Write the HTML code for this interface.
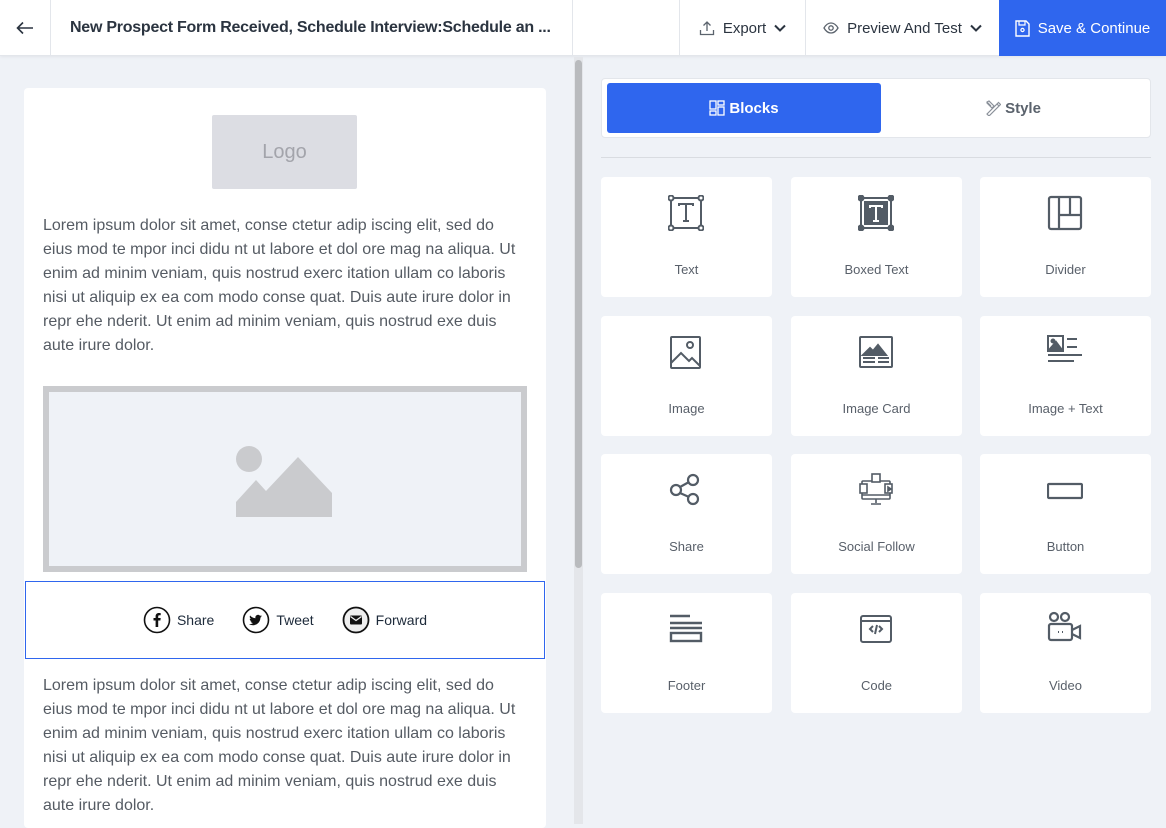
<!DOCTYPE html>
<html><head><meta charset="utf-8"><style>
*{box-sizing:border-box;margin:0;padding:0}
body{width:1166px;height:824px;overflow:hidden;background:#eff2f7;font-family:"Liberation Sans",sans-serif;position:relative}
.hdr{position:absolute;left:0;top:0;width:1166px;height:56px;background:#fff;border-bottom:1px solid #e3e6eb;box-shadow:0 1px 3px rgba(0,0,0,.06)}
.cell{position:absolute;top:0;height:56px;display:flex;align-items:center;justify-content:center;border-left:1px solid #e3e6eb;font-size:15px;color:#2b3440}
.card{position:absolute;left:24px;top:88px;width:522px;height:740px;background:#fff;border-radius:4px}
p.lo{position:absolute;left:43px;width:483px;font-size:16px;line-height:24px;color:#555b63}
.tile{position:absolute;width:171px;height:120px;background:#fff;border-radius:4px}
.tile svg{position:absolute;left:67px;top:18px}
.tile span{position:absolute;left:0;right:0;top:85px;text-align:center;font-size:13px;color:#59606a}
</style></head><body>
<div class="hdr">
 <div class="cell" style="left:0;width:50px;border:none;font-size:20px">
  <svg width="18" height="14" viewBox="0 0 18 14"><path d="M17 7H2M7 1.5 1.5 7 7 12.5" stroke="#2b3440" stroke-width="1.6" fill="none"/></svg></div>
 <div class="cell" style="left:50px;width:523px;justify-content:flex-start;padding-left:19px;font-weight:bold;font-size:16px;letter-spacing:-0.25px;border-right:1px solid #e3e6eb">New Prospect Form Received, Schedule Interview:Schedule an ...</div>
 <div class="cell" style="left:679px;width:126px;gap:8px">
  <svg width="16" height="16" viewBox="0 0 16 16"><path d="M8 11V2M4.5 5.5 8 2l3.5 3.5M1.5 10v4.5h13V10" stroke="#5b636d" stroke-width="1.3" fill="none"/></svg>Export
  <svg width="12" height="8" viewBox="0 0 12 8"><path d="M1 1.5 6 6.5 11 1.5" stroke="#2b3440" stroke-width="2" fill="none"/></svg></div>
 <div class="cell" style="left:805px;width:194px;gap:8px">
  <svg width="16" height="12" viewBox="0 0 16 12"><path d="M1 6C3 2.5 5.5 1 8 1s5 1.5 7 5c-2 3.5-4.5 5-7 5S3 9.5 1 6z" stroke="#5b636d" stroke-width="1.3" fill="none"/><circle cx="8" cy="6" r="2.2" stroke="#5b636d" stroke-width="1.3" fill="none"/></svg>Preview And Test
  <svg width="12" height="8" viewBox="0 0 12 8"><path d="M1 1.5 6 6.5 11 1.5" stroke="#2b3440" stroke-width="2" fill="none"/></svg></div>
 <div class="cell" style="left:999px;width:167px;background:#2f66ee;color:#fff;border:none;gap:8px">
  <svg width="15" height="17" viewBox="0 0 15 17"><path d="M1 1h10l3 3v12H1z" stroke="#fff" stroke-width="1.4" fill="none"/><path d="M4 1v4h6V1" stroke="#fff" stroke-width="1.2" fill="none"/><circle cx="7.5" cy="10" r="1.6" stroke="#fff" stroke-width="1.2" fill="none"/></svg>Save &amp; Continue</div>
</div>

<div class="card"></div>
<div style="position:absolute;left:212px;top:115px;width:145px;height:74px;background:#dcdde3;border-radius:2px;color:#a3a4ab;font-size:20px;display:flex;align-items:center;justify-content:center">Logo</div>
<p class="lo" style="top:214px">Lorem ipsum dolor sit amet, conse ctetur adip iscing elit, sed do eius mod te mpor inci didu nt ut labore et dol ore mag na aliqua. Ut enim ad minim veniam, quis nostrud exerc itation ullam co laboris nisi ut aliquip ex ea com modo conse quat. Duis aute irure dolor in repr ehe nderit. Ut enim ad minim veniam, quis nostrud exe duis aute irure dolor.</p>
<div style="position:absolute;left:43px;top:386px;width:484px;height:186px;border:6px solid #cacbce;background:#eff2f7"></div>
<svg style="position:absolute;left:235px;top:445px" width="98" height="72" viewBox="0 0 98 72"><circle cx="14" cy="14" r="13" fill="#cacbce"/><path d="M1 57 21 35l10 11 32-34 34 36v24H1z" fill="#cacbce"/></svg>
<div style="position:absolute;left:25px;top:581px;width:520px;height:78px;border:1px solid #2f66ee;background:#fff;display:flex;align-items:center;justify-content:center;font-size:14px;color:#1d2a3a">
 <svg width="28" height="28" viewBox="0 0 28 28"><circle cx="14" cy="14" r="12.5" stroke="#111" stroke-width="1.6" fill="none"/><path d="M15.2 21v-6.5h2.2l.3-2.5h-2.5v-1.5c0-.7.2-1.2 1.2-1.2h1.3V7.1c-.3 0-1-.1-1.9-.1-1.9 0-3.2 1.2-3.200 3.300V12h-2.100v2.500h2.100V21z" fill="#111"/></svg><span style="margin:0 28px 0 6px">Share</span>
 <svg width="28" height="28" viewBox="0 0 28 28"><circle cx="14" cy="14" r="12.5" stroke="#111" stroke-width="1.6" fill="none"/><path d="M20 10.2c-.5.2-1 .4-1.5.4.5-.3 1-.8 1.2-1.4-.5.3-1.1.5-1.7.6a2.6 2.6 0 0 0-4.5 2.4c-2.2-.1-4.1-1.2-5.4-2.7-.7 1.2-.3 2.7.8 3.5-.4 0-.8-.1-1.2-.3 0 1.3.9 2.4 2.1 2.6-.4.1-.8.1-1.2 0 .3 1 1.3 1.8 2.4 1.8A5.3 5.3 0 0 1 7 18.1c1.2.7 2.5 1.1 4 1.1 4.8 0 7.5-4 7.4-7.6.6-.4 1.1-.9 1.6-1.4z" fill="#111"/></svg><span style="margin:0 28px 0 6px">Tweet</span>
 <svg width="28" height="28" viewBox="0 0 28 28"><circle cx="14" cy="14" r="12.5" stroke="#111" stroke-width="1.8" fill="#eee"/><rect x="8" y="9.5" width="12" height="9" rx="1" fill="#111"/><path d="M8.5 10.5 14 14.5l5.5-4" stroke="#eee" stroke-width="1.3" fill="none"/></svg><span style="margin-left:6px">Forward</span>
</div>
<p class="lo" style="top:674px">Lorem ipsum dolor sit amet, conse ctetur adip iscing elit, sed do eius mod te mpor inci didu nt ut labore et dol ore mag na aliqua. Ut enim ad minim veniam, quis nostrud exerc itation ullam co laboris nisi ut aliquip ex ea com modo conse quat. Duis aute irure dolor in repr ehe nderit. Ut enim ad minim veniam, quis nostrud exe duis aute irure dolor.</p>
<div style="position:absolute;left:574px;top:57px;width:9px;height:767px;background:#e4e6ea"></div>
<div style="position:absolute;left:575px;top:60px;width:7px;height:508px;background:#b9bbbe;border-radius:4px"></div>

<div style="position:absolute;left:601px;top:78px;width:550px;height:60px;background:#fff;border:1px solid #e3e6eb;border-radius:4px"></div>
<div style="position:absolute;left:607px;top:83px;width:274px;height:50px;background:#2f66ee;border-radius:3px;color:#fff;font-weight:bold;font-size:15px;display:flex;align-items:center;justify-content:center;gap:4px">
 <svg width="16" height="16" viewBox="0 0 16 16" fill="none" stroke="#fff" stroke-width="1.3"><rect x="1" y="1" width="6" height="8"/><rect x="1" y="11" width="6" height="4"/><rect x="9" y="1" width="6" height="4"/><rect x="9" y="7" width="6" height="8"/></svg>Blocks</div>
<div style="position:absolute;left:881px;top:83px;width:264px;height:50px;color:#5b636d;font-weight:bold;font-size:15px;display:flex;align-items:center;justify-content:center;gap:4px">
 <svg width="16" height="16" viewBox="0 0 16 16" fill="none" stroke="#8a9099" stroke-width="1.2"><path d="M2 14 12 4l2 2L4 16zM12 4l1.5-1.5 2 2L14 6M2 2l4 4M2 2l2-1 5 5-2 2-5-5z"/></svg>Style</div>
<div style="position:absolute;left:601px;top:157px;width:550px;height:1px;background:#d9dce1"></div>

<div class="tile" style="left:601px;top:177px"><svg width="36" height="36" viewBox="0 0 36 36" fill="none" stroke="#535c66" stroke-width="2"><rect x="3" y="3" width="30" height="30"/><circle cx="3" cy="3" r="2.5" fill="#fff"/><circle cx="33" cy="3" r="2.5" fill="#fff"/><circle cx="3" cy="33" r="2.5" fill="#fff"/><circle cx="33" cy="33" r="2.5" fill="#fff"/><path d="M11 11V9h14v2M18 9v17M15 26h6"/></svg><span>Text</span></div>
<div class="tile" style="left:791px;top:177px"><svg width="36" height="36" viewBox="0 0 36 36" fill="none" stroke="#535c66" stroke-width="2"><path d="M3 5v26M33 5v26M5 3h26M5 33h26"/><circle cx="3" cy="3" r="2.5" fill="#535c66"/><circle cx="33" cy="3" r="2.5" fill="#535c66"/><circle cx="3" cy="33" r="2.5" fill="#535c66"/><circle cx="33" cy="33" r="2.5" fill="#535c66"/><rect x="7" y="7" width="22" height="22" fill="#535c66"/><path d="M12 13v-2h12v2M18 11v15M15 26h6" stroke="#fff"/></svg><span>Boxed Text</span></div>
<div class="tile" style="left:980px;top:177px"><svg width="36" height="36" viewBox="0 0 36 36" fill="none" stroke="#535c66" stroke-width="2.2"><rect x="2" y="2" width="32" height="32" rx="2"/><path d="M12 2v32M12 20h22M23 2v18"/></svg><span>Divider</span></div>

<div class="tile" style="left:601px;top:316px"><svg width="36" height="36" viewBox="0 0 36 36" fill="none" stroke="#535c66" stroke-width="2"><rect x="3" y="3" width="29" height="31" rx="1"/><circle cx="22" cy="11" r="3"/><path d="M3 29l10-10 8 8 3-3 8 8"/></svg><span>Image</span></div>
<div class="tile" style="left:791px;top:316px"><svg width="36" height="36" viewBox="0 0 36 36" fill="none" stroke="#535c66" stroke-width="2"><rect x="2" y="3" width="32" height="30" rx="1"/><path d="M5 21l7-7 3 3 5-6 8 10z" fill="#535c66"/><path d="M5 24h12M20 24h11M5 28h12M20 28h11" stroke-width="2"/></svg><span>Image Card</span></div>
<div class="tile" style="left:980px;top:316px"><svg width="36" height="36" viewBox="0 0 36 36" fill="none" stroke="#535c66" stroke-width="2"><rect x="1" y="2" width="15" height="15"/><path d="M2 16l7-8 6 8z" fill="#535c66"/><circle cx="6" cy="7" r="1.5" fill="#535c66"/><path d="M20 5h10M20 13h10M1 21h34M1 27h26" stroke-width="2"/></svg><span>Image + Text</span></div>

<div class="tile" style="left:601px;top:454px"><svg width="36" height="36" viewBox="0 0 36 36" fill="none" stroke="#535c66" stroke-width="2.2"><circle cx="8" cy="18" r="5"/><circle cx="25" cy="8" r="5"/><circle cx="25" cy="27" r="5"/><path d="M12 15l9-5M12 21l9 4"/></svg><span>Share</span></div>
<div class="tile" style="left:791px;top:454px"><svg width="36" height="36" viewBox="0 0 36 36" fill="none" stroke="#535c66" stroke-width="1.6"><rect x="4" y="9" width="28" height="18" rx="1"/><path d="M4 23h28M18 27v4M13 32h10"/><rect x="14" y="2" width="8" height="8" fill="#fff"/><rect x="2" y="12" width="7" height="9" fill="#fff"/><rect x="27" y="12" width="7" height="9" fill="#fff"/><path d="M30 15v4l3-2z" fill="#535c66"/></svg><span>Social Follow</span></div>
<div class="tile" style="left:980px;top:454px"><svg width="36" height="36" viewBox="0 0 36 36" fill="none" stroke="#535c66" stroke-width="2.2"><rect x="1" y="12" width="34" height="14" rx="1"/></svg><span>Button</span></div>

<div class="tile" style="left:601px;top:593px"><svg width="36" height="36" viewBox="0 0 36 36" fill="none" stroke="#535c66" stroke-width="2.4"><path d="M2 5h20M2 12h32M2 17h32"/><rect x="3" y="22" width="30" height="8"/></svg><span>Footer</span></div>
<div class="tile" style="left:791px;top:593px"><svg width="36" height="36" viewBox="0 0 36 36" fill="none" stroke="#535c66" stroke-width="2"><rect x="3" y="5" width="30" height="26" rx="2"/><path d="M3 10h30M15 15l-3 3 3 3M21 15l3 3-3 3M19 14l-2 9"/></svg><span>Code</span></div>
<div class="tile" style="left:980px;top:593px"><svg width="36" height="36" viewBox="0 0 36 36" fill="none" stroke="#535c66" stroke-width="2.2"><circle cx="7" cy="6" r="4"/><circle cx="18" cy="6" r="4"/><rect x="2" y="13" width="23" height="16" rx="2"/><path d="M25 19l8-4v12l-8-4"/><path d="M11 21h1M15 21h1" stroke-width="2"/></svg><span>Video</span></div>
</body></html>
